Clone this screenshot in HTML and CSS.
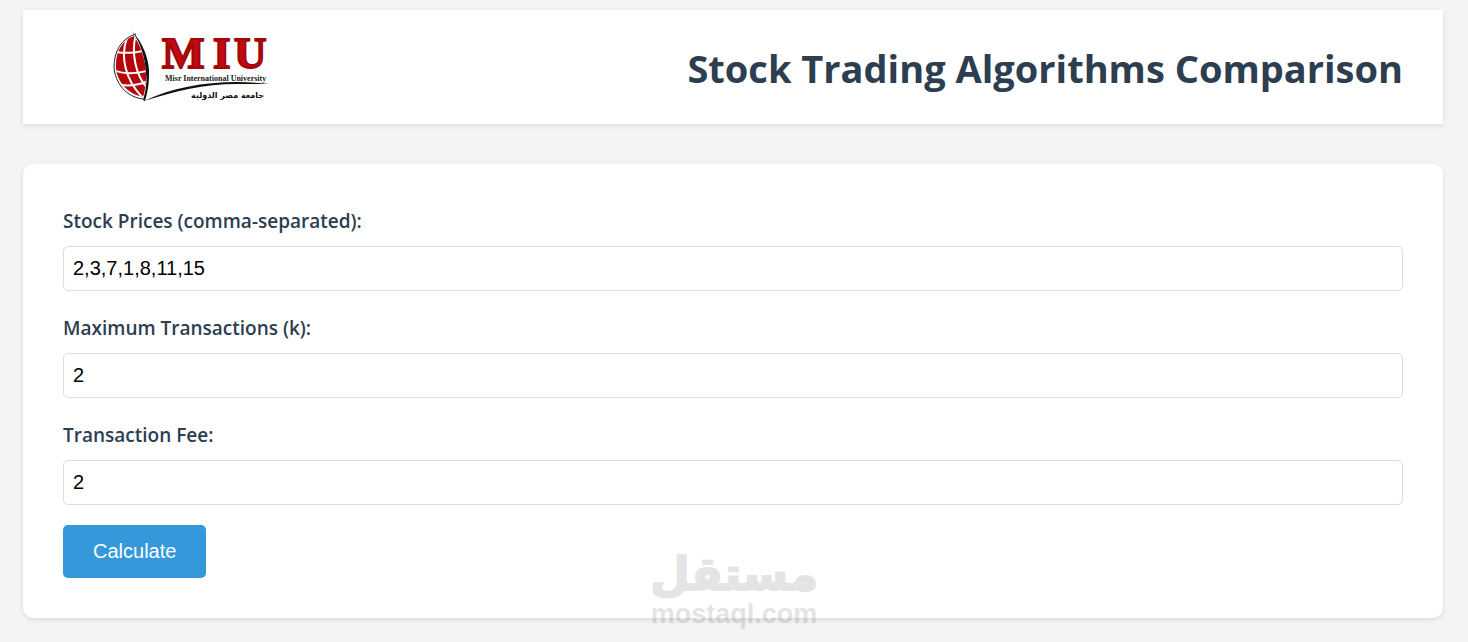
FILE: index.html
```html
<!DOCTYPE html>
<html lang="en">
<head>
  <meta charset="utf-8">
  <meta name="viewport" content="width=device-width, initial-scale=1">
  <title>Stock Trading Algorithms Comparison</title>
  <link rel="stylesheet" href="styles.css">
</head>
<body>
  <header class="header">
    <svg class="logo" width="220" height="74" viewBox="0 0 220 74" role="img" aria-label="Misr International University">
      <defs>
        <clipPath id="globe">
          <path d="M71 6C58 10 52 24 53 38C54 52 65 64 80 67C85 52 85 27 71 6Z"/>
        </clipPath>
      </defs>
      <g clip-path="url(#globe)">
        <rect class="logo-red" x="50" y="0" width="40" height="74"/>
        <g class="logo-grid">
          <path d="M64 8C57 26 62 50 80 68"/>
          <path d="M73 4C68 22 72 46 86 60"/>
          <path d="M54 22C64 24 72 23 84 20"/>
          <path d="M50 40C62 45 74 44 88 40"/>
          <path d="M54 54C64 57 74 56 88 50"/>
        </g>
      </g>
      <path class="logo-line" d="M73 4C58 8 51 22 51 37C52 53 63 67 80 69"/>
      <path class="logo-ink" d="M69 1C80 13 87 30 86 46C86 56 84 64 82 71L80 70C83 60 84 52 83 43C82 27 78 14 69 1Z"/>
      <path class="logo-ink" d="M81 71C108 58 140 52 174 52C185 52 196 53 206 54C196 54 185 54 174 54C141 54 112 61 81 71Z"/>
      <g class="logo-name">
        <text x="99" y="38">M</text>
        <text x="150" y="38">I</text>
        <text x="171" y="38">U</text>
      </g>
      <text class="logo-sub" x="102" y="51">Misr International University</text>
      <text class="logo-arabic" x="201" y="68" lang="ar" direction="rtl">جامعة مصر الدولية</text>
    </svg>
    <h1>Stock Trading Algorithms Comparison</h1>
  </header>

  <main class="card">
    <form>
      <div class="input-group">
        <label for="prices">Stock Prices (comma-separated):</label>
        <input type="text" id="prices" value="2,3,7,1,8,11,15">
      </div>
      <div class="input-group">
        <label for="transactions">Maximum Transactions (k):</label>
        <input type="number" id="transactions" value="2">
      </div>
      <div class="input-group">
        <label for="fee">Transaction Fee:</label>
        <input type="number" id="fee" value="2">
      </div>
      <button class="btn" type="button">Calculate</button>
    </form>
  </main>

  <div class="watermark">
    <span class="watermark-arabic" lang="ar" dir="rtl">مستقل</span>
    <span class="watermark-latin">mostaql.com</span>
  </div>
</body>
</html>
```

FILE: styles.css
```css
* {
  box-sizing: border-box;
}

body {
  margin: 0;
  padding: 10px 25px 24px 23px;
  font-family: 'Segoe UI', 'Open Sans', sans-serif;
  font-size: 20px;
  line-height: 32px;
  color: #2c3e50;
  background: #f4f4f4;
}

.header {
  display: flex;
  align-items: center;
  justify-content: space-between;
  padding: 20px 40px;
  margin-bottom: 40px;
  background: white;
  box-shadow: 0 2px 5px rgba(0, 0, 0, 0.1);
}

.header h1 {
  margin: 0;
  padding-top: 2px;
  font-size: 38px;
  font-weight: 700;
  line-height: 64px;
}

.logo {
  display: block;
  flex: none;
}

.logo-red {
  fill: #b4060b;
}

.logo-grid {
  fill: none;
  stroke: white;
  stroke-width: 2;
}

.logo-line {
  fill: none;
  stroke: #222;
  stroke-width: 1;
}

.logo-ink {
  fill: #111;
}

.logo-name {
  font-family: 'Liberation Serif', serif;
  font-size: 45px;
  font-weight: 700;
  fill: #c00a10;
  stroke: #a0080c;
  stroke-width: 2;
}

.logo-sub {
  font-family: 'Liberation Serif', serif;
  font-size: 8px;
  font-weight: 700;
  fill: #222;
}

.logo-arabic {
  font-family: 'DejaVu Sans', sans-serif;
  font-size: 8px;
  font-weight: 700;
  fill: #111;
}

.card {
  padding: 40px;
  background: white;
  border-radius: 10px;
  box-shadow: 0 2px 5px rgba(0, 0, 0, 0.1);
}

.input-group {
  margin-bottom: 20px;
}

.input-group label {
  display: block;
  margin-bottom: 8px;
  font-size: 19px;
  font-weight: 600;
  line-height: 34px;
}

.input-group input {
  display: block;
  width: 100%;
  height: 45px;
  padding: 10px 9px;
  border: 1px solid #ddd;
  border-radius: 5px;
  font-family: Arial, 'Liberation Sans', sans-serif;
  font-size: 20px;
  color: black;
}

.btn {
  display: block;
  padding: 15px 30px;
  border: none;
  border-radius: 5px;
  font-family: Arial, 'Liberation Sans', sans-serif;
  font-size: 20px;
  line-height: 23px;
  color: white;
  background: #3498db;
  cursor: pointer;
}

.btn:hover {
  background: #2980b9;
}

/* stamp over the bottom edge of the card */
.watermark {
  position: absolute;
  bottom: 12px;
  left: 50%;
  display: flex;
  flex-direction: column;
  align-items: center;
  transform: translateX(-50%);
  color: black;
  font-weight: 700;
  opacity: 0.1;
  pointer-events: none;
}

.watermark-arabic {
  font-family: 'DejaVu Sans', sans-serif;
  font-size: 46px;
  line-height: 48px;
  -webkit-text-stroke: 2px black;
}

.watermark-latin {
  font-family: 'Liberation Sans', sans-serif;
  font-size: 27px;
  line-height: 32px;
}
```
